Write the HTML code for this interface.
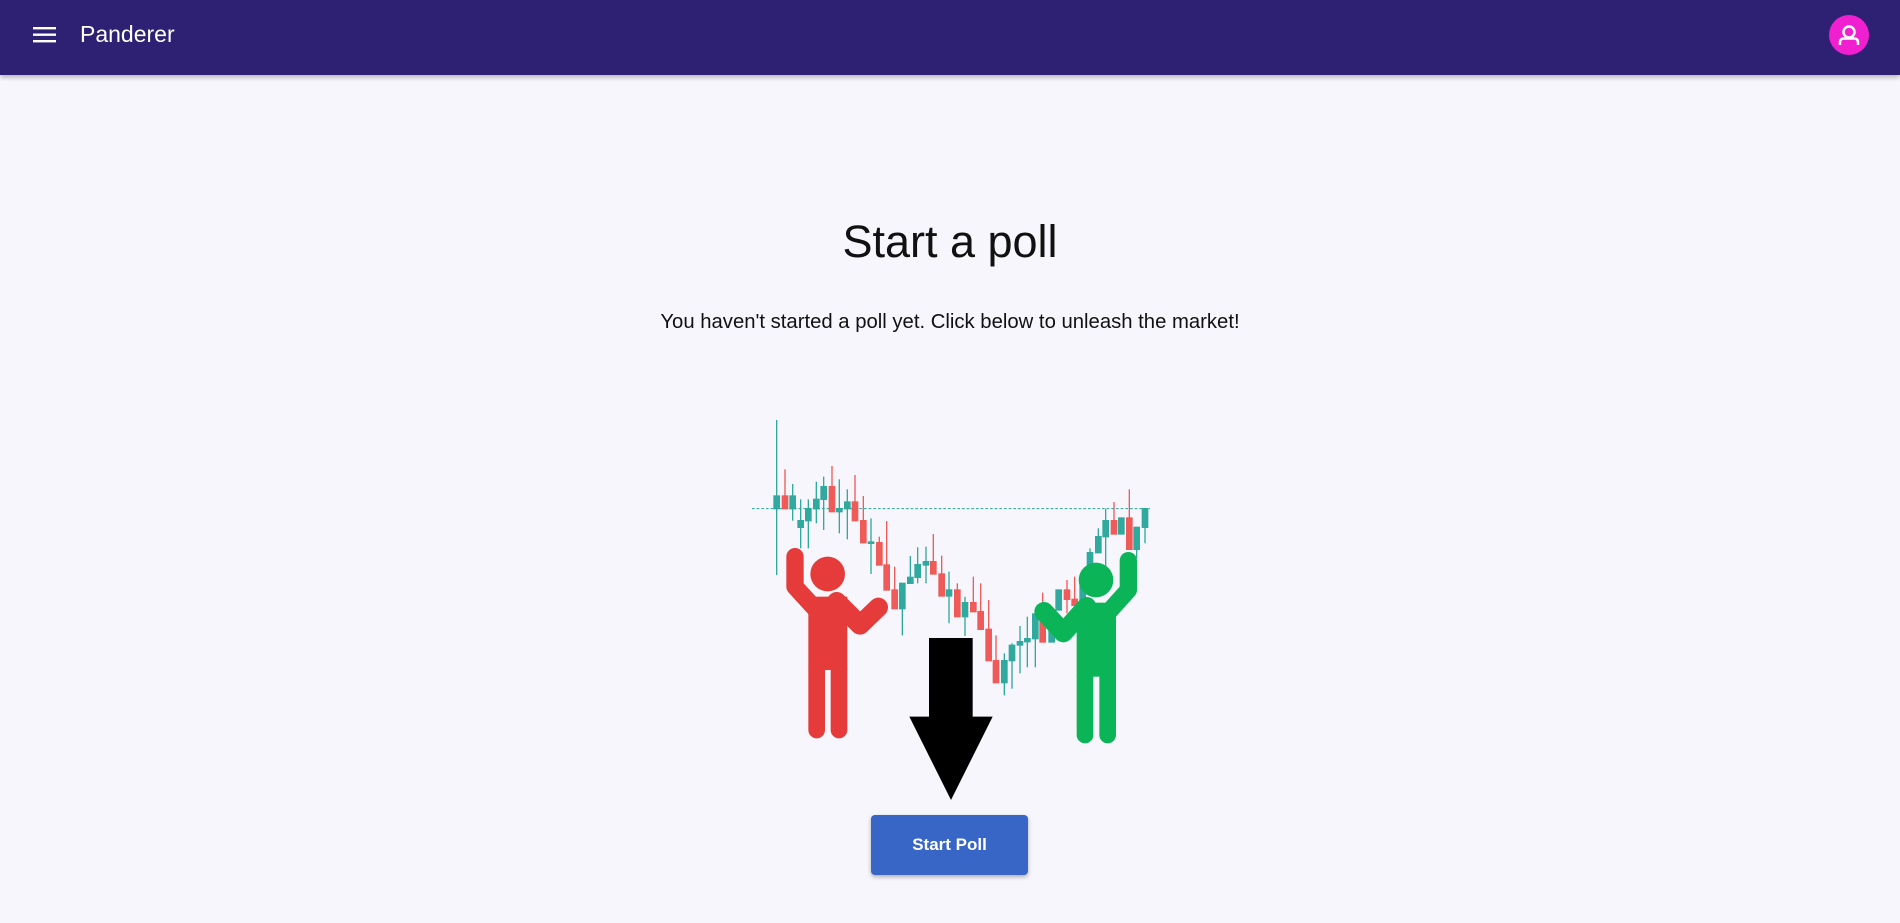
<!DOCTYPE html>
<html><head><meta charset="utf-8"><style>
html,body{margin:0;padding:0;width:1900px;height:923px;overflow:hidden;background:#f7f6fc;font-family:"Liberation Sans",sans-serif;position:relative}
.hdr{position:absolute;left:0;top:0;width:1900px;height:75px;background:#2e2072;box-shadow:0 2px 5px rgba(0,0,0,.3)}
.title{position:absolute;left:0;width:1900px;text-align:center;top:216px;font-size:45px;color:#111}
.sub{position:absolute;left:0;width:1900px;text-align:center;top:311px;font-size:20.3px;color:#111}
.btn{position:absolute;left:871px;top:815px;width:157px;height:60px;background:#3766c6;border-radius:4px;box-shadow:0 2px 4px rgba(0,0,0,.3);color:#fff;font-size:17px;font-weight:bold;text-align:center;line-height:60px}
</style></head><body>
<div class="hdr">
<svg style="position:absolute;left:33px;top:26px" width="24" height="18"><rect x="0" y="1" width="23" height="2.4" fill="#fff"/><rect x="0" y="7.5" width="23" height="2.4" fill="#fff"/><rect x="0" y="14" width="23" height="2.4" fill="#fff"/></svg>
<div style="position:absolute;left:80px;top:21px;font-size:23px;color:#fff">Panderer</div>
<svg style="position:absolute;left:1829px;top:15px" width="40" height="40"><circle cx="20" cy="20" r="20" fill="#f01fcf"/><circle cx="20" cy="17" r="5.5" fill="none" stroke="#fff" stroke-width="2.5"/><path d="M11 30v-2.5q0-4 4-4h10q4 0 4 4V30" fill="none" stroke="#fff" stroke-width="2.5"/></svg>
</div>
<div class="title">Start a poll</div>
<div class="sub">You haven't started a poll yet. Click below to unleash the market!</div>
<svg style="position:absolute;left:740px;top:410px;overflow:visible" width="420" height="400" viewBox="0 0 1260 1200">
<line x1="36" y1="296" x2="1230" y2="296" stroke="#26a69a" stroke-width="3" stroke-dasharray="8,6"/>
<g stroke-width="4" opacity="0.95">
<g stroke="#26a69a" fill="#26a69a">
<line x1="110" y1="30" x2="110" y2="495"/><rect x="102" y="258" width="16" height="38"/>
<line x1="158" y1="222" x2="158" y2="332"/><rect x="150" y="258" width="16" height="38"/>
<line x1="182" y1="268" x2="182" y2="415"/><rect x="174" y="332" width="16" height="20"/>
<line x1="205" y1="268" x2="205" y2="415"/><rect x="197" y="296" width="16" height="36"/>
<line x1="229" y1="215" x2="229" y2="340"/><rect x="221" y="268" width="16" height="28"/>
<line x1="251" y1="200" x2="251" y2="360"/><rect x="243" y="230" width="16" height="38"/>
<line x1="298" y1="208" x2="298" y2="370"/><rect x="290" y="296" width="16" height="9"/>
<line x1="322" y1="238" x2="322" y2="388"/><rect x="314" y="276" width="16" height="20"/>
<line x1="393" y1="325" x2="393" y2="492"/><rect x="385" y="396" width="16" height="4"/>
<line x1="487" y1="520" x2="487" y2="676"/><rect x="479" y="520" width="16" height="76"/>
<line x1="511" y1="438" x2="511" y2="520"/><rect x="503" y="502" width="16" height="18"/>
<line x1="533" y1="412" x2="533" y2="520"/><rect x="525" y="464" width="16" height="38"/>
<line x1="558" y1="410" x2="558" y2="520"/><rect x="550" y="455" width="16" height="10"/>
<line x1="627" y1="485" x2="627" y2="640"/><rect x="619" y="540" width="16" height="18"/>
<line x1="675" y1="560" x2="675" y2="678"/><rect x="667" y="578" width="16" height="42"/>
<line x1="793" y1="730" x2="793" y2="856"/><rect x="785" y="752" width="16" height="66"/>
<line x1="816" y1="700" x2="816" y2="836"/><rect x="808" y="706" width="16" height="46"/>
<line x1="840" y1="648" x2="840" y2="790"/><rect x="832" y="695" width="16" height="10"/>
<line x1="862" y1="620" x2="862" y2="772"/><rect x="854" y="686" width="16" height="9"/>
<line x1="886" y1="600" x2="886" y2="772"/><rect x="878" y="612" width="16" height="74"/>
<rect x="927" y="605" width="16" height="91"/>
<rect x="948" y="540" width="16" height="60"/>
<rect x="1020" y="520" width="16" height="60"/>
<line x1="1050" y1="415" x2="1050" y2="480"/><rect x="1042" y="428" width="16" height="42"/>
<line x1="1075" y1="355" x2="1075" y2="430"/><rect x="1067" y="380" width="16" height="48"/>
<line x1="1097" y1="296" x2="1097" y2="470"/><rect x="1089" y="332" width="16" height="48"/>
<rect x="1136" y="324" width="16" height="48"/>
<line x1="1190" y1="352" x2="1190" y2="445"/><rect x="1182" y="352" width="16" height="66"/>
<line x1="1215" y1="296" x2="1215" y2="400"/><rect x="1207" y="296" width="16" height="56"/>
</g>
<g stroke="#ef5350" fill="#ef5350">
<line x1="135" y1="178" x2="135" y2="296"/><rect x="127" y="258" width="16" height="38"/>
<line x1="276" y1="168" x2="276" y2="305"/><rect x="268" y="230" width="16" height="75"/>
<line x1="345" y1="195" x2="345" y2="332"/><rect x="337" y="276" width="16" height="56"/>
<line x1="370" y1="258" x2="370" y2="398"/><rect x="362" y="332" width="16" height="66"/>
<line x1="418" y1="380" x2="418" y2="465"/><rect x="410" y="398" width="16" height="67"/>
<line x1="440" y1="333" x2="440" y2="540"/><rect x="432" y="465" width="16" height="75"/>
<line x1="464" y1="470" x2="464" y2="596"/><rect x="456" y="540" width="16" height="56"/>
<line x1="580" y1="372" x2="580" y2="492"/><rect x="572" y="455" width="16" height="37"/>
<line x1="605" y1="437" x2="605" y2="558"/><rect x="597" y="492" width="16" height="66"/>
<line x1="652" y1="520" x2="652" y2="620"/><rect x="644" y="540" width="16" height="80"/>
<line x1="700" y1="500" x2="700" y2="605"/><rect x="692" y="578" width="16" height="27"/>
<line x1="722" y1="520" x2="722" y2="658"/><rect x="714" y="605" width="16" height="53"/>
<line x1="746" y1="570" x2="746" y2="752"/><rect x="738" y="658" width="16" height="94"/>
<line x1="768" y1="676" x2="768" y2="818"/><rect x="760" y="752" width="16" height="66"/>
<line x1="908" y1="548" x2="908" y2="696"/><rect x="900" y="610" width="16" height="86"/>
<line x1="981" y1="510" x2="981" y2="610"/><rect x="973" y="540" width="16" height="28"/>
<line x1="1004" y1="500" x2="1004" y2="586"/><rect x="996" y="568" width="16" height="18"/>
<line x1="1122" y1="276" x2="1122" y2="372"/><rect x="1114" y="332" width="16" height="40"/>
<line x1="1168" y1="238" x2="1168" y2="418"/><rect x="1160" y="324" width="16" height="94"/>
</g>
</g>
<g fill="#e53b3b" stroke="#e53b3b" stroke-linecap="round" stroke-linejoin="round">
<circle cx="263" cy="492" r="52" stroke="none"/>
<rect x="205" y="560" width="117" height="220" stroke="none"/>
<line x1="230" y1="780" x2="230" y2="960" stroke-width="50"/>
<line x1="297" y1="780" x2="297" y2="960" stroke-width="50"/>
<polyline points="165,440 165,530 240,612" fill="none" stroke-width="52"/>
<polyline points="290,575 360,645 415,592" fill="none" stroke-width="58"/>
</g>
<g fill="#0cb458" stroke="#0cb458" stroke-linecap="round" stroke-linejoin="round">
<circle cx="1068" cy="510" r="52" stroke="none"/>
<rect x="1010" y="578" width="118" height="222" stroke="none"/>
<line x1="1035" y1="800" x2="1035" y2="975" stroke-width="50"/>
<line x1="1103" y1="800" x2="1103" y2="975" stroke-width="50"/>
<polyline points="1165,452 1165,540 1095,618" fill="none" stroke-width="52"/>
<polyline points="1040,590 970,668 912,605" fill="none" stroke-width="58"/>
</g>
<path d="M567 684H698V920H758L633 1170L508 920H567Z" fill="#000"/>
</svg>
<div class="btn">Start Poll</div>
</body></html>
